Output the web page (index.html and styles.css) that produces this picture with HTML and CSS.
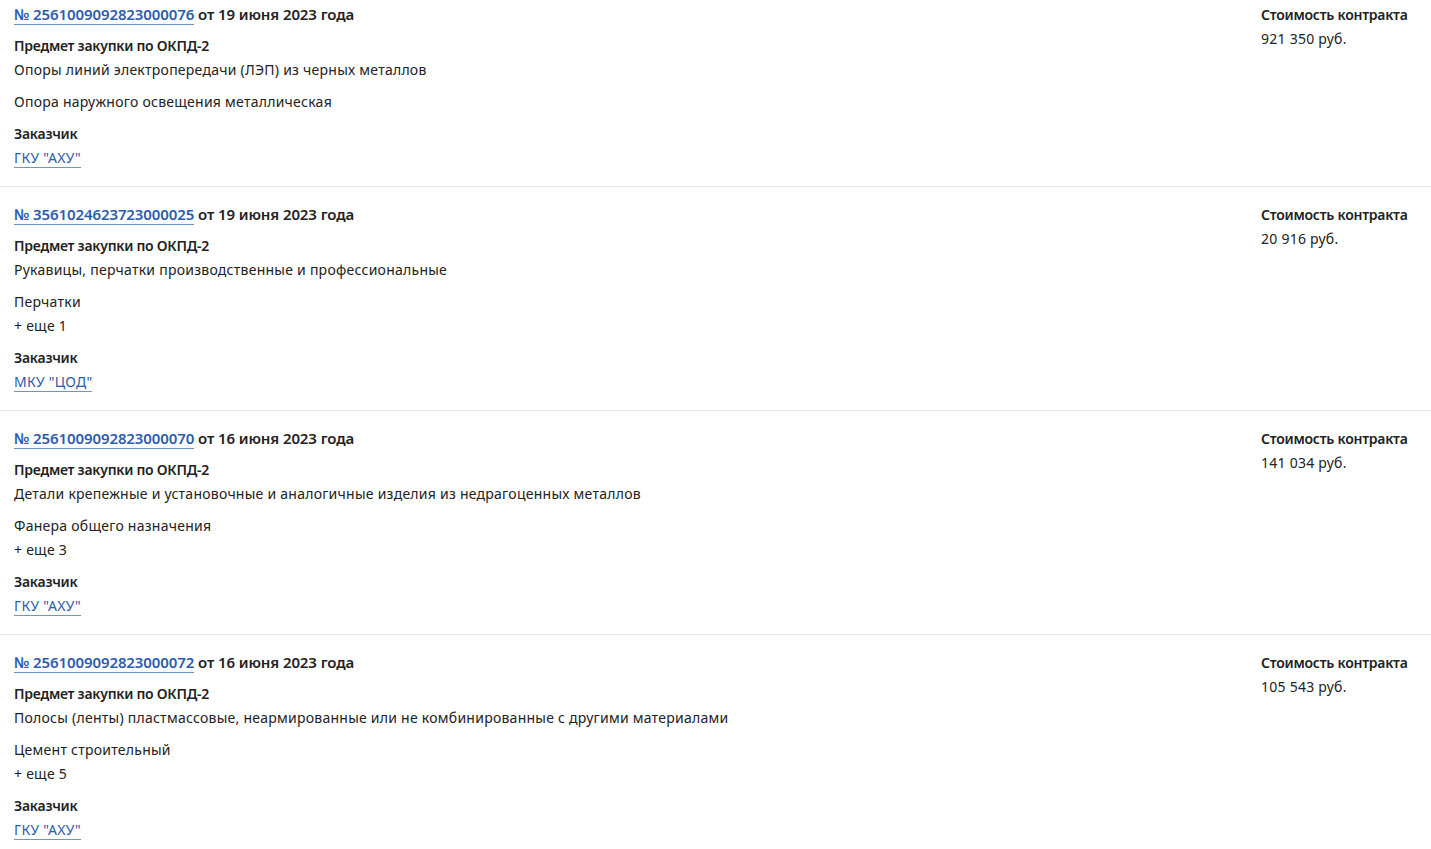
FILE: index.html
```html
<!DOCTYPE html>
<html lang="ru">
<head>
    <meta charset="UTF-8">
    <meta name="viewport" content="width=device-width, initial-scale=1.0">
    <title>Контракты</title>
    <link rel="stylesheet" href="styles.css">
</head>
<body>
    <div class="list">
        <div class="contract">
            <div class="main">
                <div class="title"><a href="#" class="link">№ 2561009092823000076</a> от 19 июня 2023 года</div>
                <div class="label">Предмет закупки по ОКПД-2</div>
                <div class="text">Опоры линий электропередачи (ЛЭП) из черных металлов</div>
                <div class="items">
                    <div class="text">Опора наружного освещения металлическая</div>
                </div>
                <div class="label">Заказчик</div>
                <div class="text"><a href="#" class="link thin">ГКУ "АХУ"</a></div>
            </div>
            <div class="price">
                <div class="label">Стоимость контракта</div>
                <div class="text">921 350 руб.</div>
            </div>
        </div>

        <div class="contract">
            <div class="main">
                <div class="title"><a href="#" class="link">№ 3561024623723000025</a> от 19 июня 2023 года</div>
                <div class="label">Предмет закупки по ОКПД-2</div>
                <div class="text">Рукавицы, перчатки производственные и профессиональные</div>
                <div class="items">
                    <div class="text">Перчатки</div>
                    <div class="text">+ еще 1</div>
                </div>
                <div class="label">Заказчик</div>
                <div class="text"><a href="#" class="link thin">МКУ "ЦОД"</a></div>
            </div>
            <div class="price">
                <div class="label">Стоимость контракта</div>
                <div class="text">20 916 руб.</div>
            </div>
        </div>

        <div class="contract">
            <div class="main">
                <div class="title"><a href="#" class="link">№ 2561009092823000070</a> от 16 июня 2023 года</div>
                <div class="label">Предмет закупки по ОКПД-2</div>
                <div class="text">Детали крепежные и установочные и аналогичные изделия из недрагоценных металлов</div>
                <div class="items">
                    <div class="text">Фанера общего назначения</div>
                    <div class="text">+ еще 3</div>
                </div>
                <div class="label">Заказчик</div>
                <div class="text"><a href="#" class="link thin">ГКУ "АХУ"</a></div>
            </div>
            <div class="price">
                <div class="label">Стоимость контракта</div>
                <div class="text">141 034 руб.</div>
            </div>
        </div>

        <div class="contract">
            <div class="main">
                <div class="title"><a href="#" class="link">№ 2561009092823000072</a> от 16 июня 2023 года</div>
                <div class="label">Предмет закупки по ОКПД-2</div>
                <div class="text">Полосы (ленты) пластмассовые, неармированные или не комбинированные с другими материалами</div>
                <div class="items">
                    <div class="text">Цемент строительный</div>
                    <div class="text">+ еще 5</div>
                </div>
                <div class="label">Заказчик</div>
                <div class="text"><a href="#" class="link thin">ГКУ "АХУ"</a></div>
            </div>
            <div class="price">
                <div class="label">Стоимость контракта</div>
                <div class="text">105 543 руб.</div>
            </div>
        </div>
    </div>
</body>
</html>
```

FILE: styles.css
```css
body {
    margin: 0;
    font-family: 'Noto Sans', sans-serif;
    font-size: 14px;
    line-height: 24px;
    color: #222;
    background: #fff;
}
.list {
    margin-top: -13px;
}
.contract {
    display: flex;
    justify-content: space-between;
    padding: 16px 0 16px 14px;
    border-bottom: 1px solid #e6e6e6;
}
.main {
    display: flex;
    flex-direction: column;
}
.text {
    letter-spacing: 0.25px;
}
.title {
    font-weight: 600;
    font-size: 15px;
    line-height: 22px;
    letter-spacing: -0.1px;
    margin: 0 0 9px;
}
.label {
    font-weight: 600;
    letter-spacing: -0.25px;
}
.items {
    margin: 8px 0;
}
.link {
    color: #2c5cad;
    text-decoration: none;
    border-bottom: 1px solid #6b95d3;
}
.link.thin {
    font-weight: normal;
}
.price {
    width: 170px;
    white-space: nowrap;
}
```
